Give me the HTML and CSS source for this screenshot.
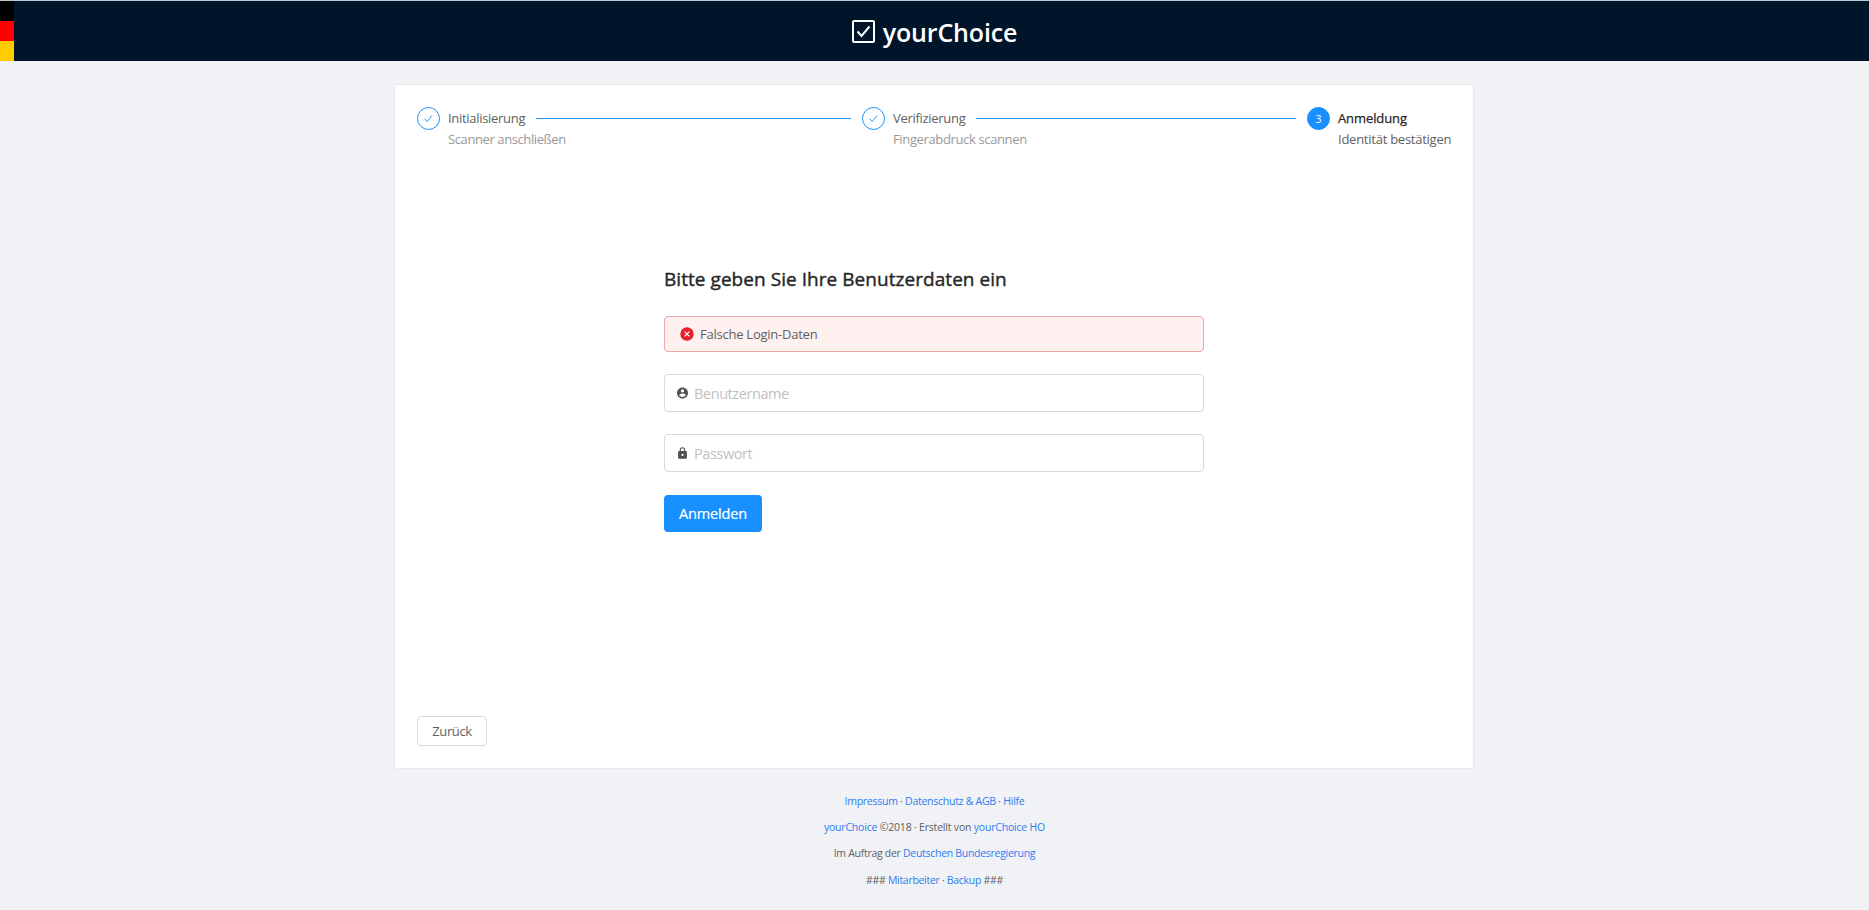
FILE: index.html
```html
<!DOCTYPE html>
<html lang="de">
<head>
<meta charset="utf-8">
<title>yourChoice</title>
<link rel="stylesheet" href="styles.css">
</head>
<body>
<header class="header">
  <div class="flag"><i class="black"></i><i class="red"></i><i class="gold"></i></div>
  <svg class="logo-icon" viewBox="0 0 23 23"><rect x="1" y="1" width="21" height="21" rx="1"/><path d="M5.500 11.500l4 4.500 8-9.500"/></svg>
  <h1 class="logo">yourChoice</h1>
</header>
<main class="card">
  <ol class="steps">
    <li class="step first">
      <span class="dot"><svg viewBox="0 0 12 12"><path d="M1.800 6.200l2.800 3.200 5.400-6.800"/></svg></span>
      <div class="step-body"><div class="step-title">Initialisierung</div><div class="step-desc">Scanner anschließen</div></div>
    </li>
    <li class="step second">
      <span class="dot"><svg viewBox="0 0 12 12"><path d="M1.800 6.200l2.800 3.200 5.400-6.800"/></svg></span>
      <div class="step-body"><div class="step-title">Verifizierung</div><div class="step-desc">Fingerabdruck scannen</div></div>
    </li>
    <li class="step active">
      <span class="dot">3</span>
      <div class="step-body"><div class="step-title">Anmeldung</div><div class="step-desc">Identität bestätigen</div></div>
    </li>
  </ol>
  <form class="form">
    <h2 class="heading">Bitte geben Sie Ihre Benutzerdaten ein</h2>
    <div class="alert">
      <svg viewBox="0 0 14 14"><circle cx="7" cy="7" r="6.700"/><path d="M4.700 4.700l4.600 4.600M9.300 4.700L4.700 9.300"/></svg>
      <span>Falsche Login-Daten</span>
    </div>
    <div class="field">
      <svg viewBox="2 2 20 20"><path d="M12 2C6.480 2 2 6.480 2 12s4.480 10 10 10 10-4.480 10-10S17.520 2 12 2zm0 3a3 3 0 1 1 0 6 3 3 0 0 1 0-6zm0 14.200a7.200 7.200 0 0 1-6-3.220c.03-1.990 4-3.080 6-3.080s5.970 1.090 6 3.080a7.200 7.200 0 0 1-6 3.220z"/></svg>
      <span>Benutzername</span>
    </div>
    <div class="field">
      <svg viewBox="2 1 20 21"><path d="M18 8h-1V6A5 5 0 0 0 7 6v2H6a2 2 0 0 0-2 2v10c0 1.100.9 2 2 2h12a2 2 0 0 0 2-2V10a2 2 0 0 0-2-2zm-6 9a2 2 0 1 1 0-4 2 2 0 0 1 0 4zm3.100-9H8.900V6a3.100 3.100 0 0 1 6.200 0z"/></svg>
      <span>Passwort</span>
    </div>
    <button class="submit" type="button">Anmelden</button>
  </form>
  <button class="back" type="button">Zurück</button>
</main>
<footer class="footer">
  <p class="links"><a>Impressum</a> · <a>Datenschutz &amp; AGB</a> · <a>Hilfe</a></p>
  <p class="copyright"><a>yourChoice</a> ©2018 · Erstellt von <a>yourChoice HO</a></p>
  <p class="client">Im Auftrag der <a>Deutschen Bundesregierung</a></p>
  <p class="internal">### <a>Mitarbeiter</a> · <a>Backup</a> ###</p>
</footer>
</body>
</html>
```
FILE: styles.css
```css
* { box-sizing: border-box; }
body { margin: 0; height: 910px; background: #f0f2f5; color: #5f5f5f; font-family: "Open Sans", "Noto Sans", sans-serif; font-size: 13px; line-height: 21px; }
h1, h2, p, ol { margin: 0; padding: 0; font-weight: inherit; }
span { white-space: nowrap; }
.header { position: relative; height: 61px; background: #001529; border-top: 1px solid #b9c9d2; display: flex; justify-content: center; align-items: center; gap: 8px; color: #fff; }
.flag { position: absolute; left: 0; top: 0; width: 14px; height: 60px; display: grid; grid-template-rows: repeat(3, 20px); }
.black { background: #000; }
.red { background: #f00; }
.gold { background: #fc0; }
.logo-icon { width: 23px; height: 23px; fill: none; stroke: #fff; stroke-width: 2; }
.logo { font-size: 25px; font-weight: 600; line-height: 34px; letter-spacing: -0.15px; padding-top: 2px; }
.card { height: 685px; margin: 23px 395px 0 394px; background: #fff; border: 1px solid #e8e8e8; border-radius: 2px; padding: 22px; display: flex; flex-direction: column; align-items: flex-start; }
.steps { list-style: none; display: flex; width: 1035px; height: 44px; }
.step { display: flex; gap: 8px; width: 445px; flex: none; }
.step.active { width: 145px; }
.dot { width: 23px; height: 23px; border: 1px solid #1890ff; border-radius: 50%; display: flex; align-items: center; justify-content: center; font-size: 11px; flex: none; }
.dot svg { width: 11px; height: 11px; fill: none; stroke: #1890ff; stroke-width: 1; }
.active .dot { background: #1890ff; color: #fff; }
.step-body { flex: 1; }
.step-title { display: flex; align-items: center; gap: 11px; height: 22px; padding-right: 11px; letter-spacing: -0.3px; }
.step-title::after { content: ""; height: 1px; background: #1890ff; box-shadow: 0 0 0.5px #1890ff; flex: 1; }
.active .step-title::after { display: none; }
.step-desc { color: #999; letter-spacing: -0.4px; }
.second .step-desc { letter-spacing: -0.36px; }
.active .step-title { color: #262626; letter-spacing: -0.1px; -webkit-text-stroke: 0.25px #262626; }
.active .step-desc { color: #5f5f5f; letter-spacing: -0.25px; }
.form { width: 540px; margin: 114px 0 0 247px; }
.heading { font-size: 19px; color: #262626; line-height: 28px; letter-spacing: 0.05px; -webkit-text-stroke: 0.4px #262626; }
.alert { margin-top: 23px; height: 36px; border: 1px solid #f3a6a8; background: #fff1f0; border-radius: 4px; display: flex; align-items: center; padding-left: 15px; gap: 6px; letter-spacing: -0.24px; }
.alert svg { width: 14px; height: 14px; fill: #e8202c; stroke: #fff; stroke-width: 1.2; }
.alert circle { stroke: none; }
.field { margin-top: 22px; height: 38px; border: 1px solid #d9d9d9; border-radius: 4px; display: flex; align-items: center; padding-left: 12px; gap: 6px; color: #bfbfbf; font-size: 14.5px; letter-spacing: -0.42px; }
.field svg { width: 11px; height: 12px; fill: #505050; }
button { font-family: inherit; display: flex; align-items: center; justify-content: center; padding: 0; border-radius: 4px; }
.submit { margin-top: 23px; width: 98px; height: 37px; background: #1890ff; color: #fff; border: 0; font-size: 14.5px; letter-spacing: -0.15px; -webkit-text-stroke: 0.2px #fff; }
.back { width: 70px; height: 30px; background: #fff; border: 1px solid #d9d9d9; color: #5f5f5f; font-size: 13px; letter-spacing: -0.35px; margin-top: auto; }
.footer { padding-top: 22px; text-align: center; font-size: 10.5px; }
.footer p { height: 26px; }
.footer .internal { padding-top: 1px; letter-spacing: -0.3px; }
.links { letter-spacing: -0.26px; }
.copyright { letter-spacing: -0.2px; }
.client { letter-spacing: -0.29px; }
.footer a { color: #2f7cf0; }
```
